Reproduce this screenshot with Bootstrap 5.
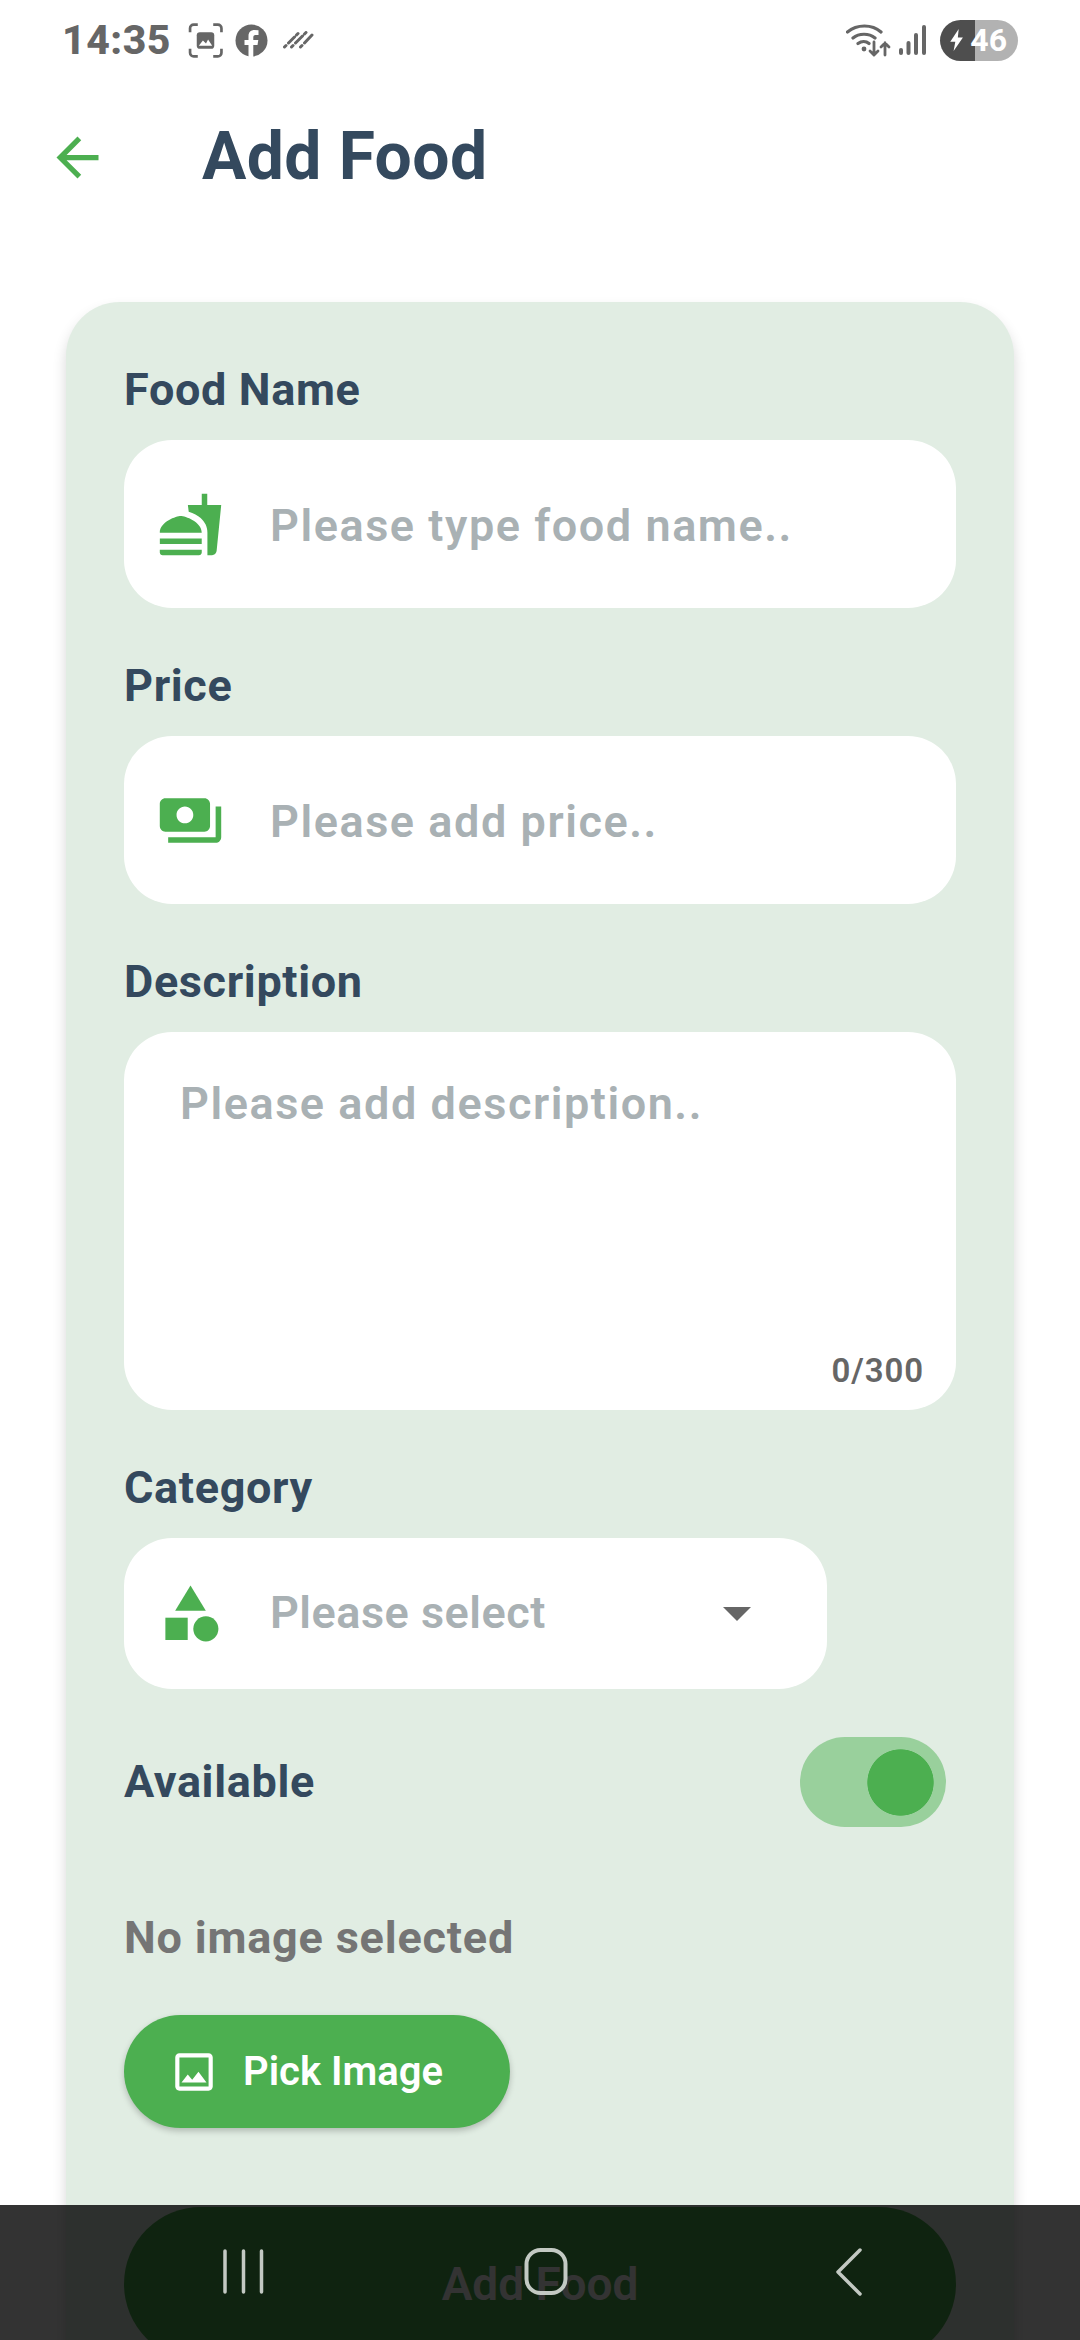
<!DOCTYPE html>
<html lang="en">
<head>
<meta charset="utf-8">
<title>Add Food</title>
<link href="https://cdn.jsdelivr.net/npm/bootstrap@5.3.0/dist/css/bootstrap.min.css" rel="stylesheet">
<style>
html,body{height:2340px;overflow:hidden;background:#fff;font-family:Roboto,"Liberation Sans",sans-serif}
.phone{position:relative;height:2340px;overflow:hidden}
.statusbar{height:80px;padding:0 62px;color:#666}
.clock{font-size:41px;font-weight:800;line-height:1;letter-spacing:.5px;margin-right:17px}
.st-ic{display:block;fill:#666}
.shot-ic{margin-right:12px}
.stripes{margin-left:15px}
.sig-ic{margin-left:8px}
.batt{width:78px;height:41px;border-radius:21px;background:linear-gradient(90deg,#4e4e4e 45%,#b2b2b2 45%);color:#fff;font-size:32px;font-weight:700;line-height:41px;margin-left:14px;padding-right:11px}
.bolt{left:10px}
.appbar{height:152px;padding:2px 0 0 46px}
.back-ic{width:63px;height:63px;fill:#4caf50}
.page-title{font-size:66px;font-weight:700;letter-spacing:.4px;color:#34495e;margin:0 0 0 93px;line-height:1}
.form-panel{margin:70px 66px 0;padding:63px 58px 0;background:#e1ede3;border-radius:54px 54px 0 0;box-shadow:0 8px 14px rgba(0,0,0,.16);height:2300px}
.fld-label{display:block;font-size:45px;font-weight:700;line-height:50px;height:50px;letter-spacing:.65px;color:#34495e;margin:0 0 25px}
.fld{height:168px;margin-bottom:53px;background:#fff;border-radius:48px;padding-left:33px;gap:46px}
.fld-ic{width:67px;height:67px;flex:none;fill:#4caf50}
.fld-in,.fld-in:focus{border:0;padding:3px 0 0;background:transparent;box-shadow:none;font-size:45px;font-weight:600;letter-spacing:1.55px;color:#34495e;border-radius:0}
.fld-in::placeholder,.ph-txt{color:#a9b1b4;opacity:1}
.area-wrap{position:relative;height:378px;margin-bottom:53px;background:#fff;border-radius:48px}
.area-in,.area-in:focus{height:100%;padding:47px 56px 0;resize:none;line-height:50px;background:transparent}
.counter{position:absolute;right:32px;bottom:19px;font-size:33px;font-weight:600;line-height:40px;letter-spacing:.9px;color:#666}
.sel-box{width:703px;height:151px;background:#fff;border-radius:48px;padding:0 76px 0 33px;gap:46px;margin-bottom:48px}
.ph-txt{font-size:45px;font-weight:600;letter-spacing:.5px;padding-bottom:2px}
.caret-tri{width:0;height:0;border-left:14px solid transparent;border-right:14px solid transparent;border-top:14px solid #666;margin-left:auto}
.avail-row{height:90px;margin-bottom:86px;padding-right:10px}
.avail-row .fld-label{margin:0}
.form-switch .sw-in.form-check-input{width:146px;height:90px;margin:0;float:none;border:0;border-radius:45px;background-color:#99d09c;background-image:radial-gradient(circle closest-side,#4caf50 98%,transparent 100%);background-size:67px 67px;background-repeat:no-repeat;background-position:right 12px center;box-shadow:none}
.switch-box{padding:0;margin:0;min-height:0}
.no-img{font-size:45px;font-weight:700;line-height:50px;letter-spacing:.8px;color:#757575;margin:0 0 52px}
.pick-btn,.pick-btn:hover{width:386px;height:113px;padding:0 0 0 45px;gap:24px;border:0;border-radius:57px;background:#4caf50;color:#fff;font-size:40px;font-weight:600;box-shadow:0 3px 6px rgba(0,0,0,.22);margin-bottom:79px}
.pick-btn svg{width:50px;height:50px;fill:#fff;flex:none}
.add-btn,.add-btn:hover{width:100%;height:154px;border:0;border-radius:77px;background:#4caf50;color:#fff;font-size:46px;font-weight:600;padding:0}
.sysnav{position:absolute;left:0;right:0;bottom:0;height:135px;background:rgba(0,0,0,.8)}
.sysnav svg{display:block;width:1080px;height:135px}
</style>
</head>
<body>
<div class="phone">
  <div class="statusbar d-flex align-items-center justify-content-between">
    <div class="d-flex align-items-center">
      <span class="clock">14:35</span>
      <svg class="st-ic shot-ic" width="35" height="35" viewBox="0 0 33 34"><path d="M1.500 9V5a3.500 3.500 0 0 1 3.500-3.500H9M24 1.500h4.500A3.500 3.500 0 0 1 32 5v4M32 25v4a3.500 3.500 0 0 1-3.500 3.500H24M9 32.500H5A3.500 3.500 0 0 1 1.500 29v-4" fill="none" stroke="#666" stroke-width="2.600"/><rect x="8" y="9" width="17" height="16" rx="3"/><path d="M10 22l4-5 3 3 2-4 4 6z" fill="#fff"/></svg>
      <svg class="st-ic" width="33" height="33" viewBox="0 0 32 33"><circle cx="16" cy="16.500" r="16"/><path d="M13 33V21H9v-5h4v-4c0-4 2.500-6 6-6l4 .3V11h-2.800c-2 0-2.400 1-2.400 2.400V16h5l-.8 5h-4.200v12z" fill="#fff"/></svg>
      <svg class="stripes" width="31" height="18" viewBox="0 0 30 18"><path d="M1 16l1.500-1.500M5 12l6-6M13 4l1.500-1.500M8 16l1.500-1.500M12 12l7-7M21 3l1.500-1.500M17 16l1.500-1.500M21 12l7.500-8" fill="none" stroke="#666" stroke-width="3" stroke-linecap="round"/></svg>
    </div>
    <div class="d-flex align-items-center">
      <svg width="45" height="34" viewBox="0 0 45 34" fill="none" stroke="#666" stroke-linecap="round"><path d="M1.500 9C11 1 26 1 35 9M7 15c6-5 16-5 22 0M12 20.500c3.500-2.500 8-2.500 11 0" stroke-width="3.200"/><circle cx="18" cy="26" r="2.400" fill="#666" stroke="none"/><path d="M28 19v13m-4-4 4 4 4-4M39 32V20m-4 4 4-4 4 4" stroke-width="2.800"/></svg>
      <svg class="sig-ic" width="27" height="30" viewBox="0 0 27 30" fill="#666"><rect x="0" y="23" width="4" height="7" rx="2"/><rect x="7.500" y="16" width="4" height="14" rx="2"/><rect x="15" y="8" width="4" height="22" rx="2"/><rect x="23" y="0" width="4" height="30" rx="2"/></svg>
      <div class="batt d-flex align-items-center justify-content-end position-relative"><svg class="bolt position-absolute top-50 translate-middle-y" width="14" height="22" viewBox="0 0 16 26"><path d="M10 0L0 15h6l-2 11L15 10H9z" fill="#fff"/></svg><span>46</span></div>
    </div>
  </div>

  <div class="appbar d-flex align-items-center">
    <svg class="back-ic" viewBox="0 0 24 24"><path d="M20 11H7.830l5.590-5.590L12 4l-8 8 8 8 1.410-1.410L7.830 13H20v-2z"/></svg>
    <h1 class="page-title">Add Food</h1>
  </div>

  <form class="form-panel">
    <label class="fld-label" for="fn">Food Name</label>
    <div class="fld d-flex align-items-center">
      <svg class="fld-ic" viewBox="0 0 24 24"><path d="M18.060 22.990h1.660c.84 0 1.530-.64 1.630-1.460L23 5.050h-5V1h-1.970v4.050h-4.970l.3 2.340c1.710.47 3.310 1.320 4.270 2.260 1.440 1.420 2.430 2.890 2.430 5.290v8.050zM1 21.990V21h15.030v.99c0 .55-.45 1-1.010 1H2.010c-.56 0-1.010-.45-1.010-1zm15.030-7c0-4-6.010-6.010-7.520-6.010-1.500 0-7.510 2.010-7.510 6.010h15.030zM1.020 17h15v2h-15z"/></svg>
      <input id="fn" class="form-control fld-in" type="text" placeholder="Please type food name..">
    </div>

    <label class="fld-label" for="pr">Price</label>
    <div class="fld d-flex align-items-center">
      <svg class="fld-ic" viewBox="0 0 24 24"><path d="M19 14V6c0-1.100-.9-2-2-2H3c-1.100 0-2 .9-2 2v8c0 1.100.9 2 2 2h14c1.100 0 2-.9 2-2zm-9-1c-1.660 0-3-1.340-3-3s1.340-3 3-3 3 1.340 3 3-1.340 3-3 3zm13-6v11c0 1.100-.9 2-2 2H4v-2h17V7h2z"/></svg>
      <input id="pr" class="form-control fld-in" type="text" placeholder="Please add price..">
    </div>

    <label class="fld-label" for="ds">Description</label>
    <div class="area-wrap">
      <textarea id="ds" class="form-control fld-in area-in" placeholder="Please add description.."></textarea>
      <span class="counter">0/300</span>
    </div>

    <label class="fld-label">Category</label>
    <div class="sel-box d-flex align-items-center">
      <svg class="fld-ic" viewBox="0 0 24 24"><path d="M12 2l-5.500 9h11z"/><circle cx="17.500" cy="17.500" r="4.500"/><path d="M3 13.500h8v8H3z"/></svg>
      <span class="ph-txt">Please select</span>
      <span class="caret-tri"></span>
    </div>

    <div class="avail-row d-flex align-items-center justify-content-between">
      <label class="fld-label" for="av">Available</label>
      <div class="form-check form-switch switch-box"><input id="av" class="form-check-input sw-in" type="checkbox" role="switch" checked></div>
    </div>

    <p class="no-img">No image selected</p>
    <button type="button" class="btn pick-btn d-flex align-items-center">
      <svg viewBox="0 0 24 24"><path d="M19 5v14H5V5h14m0-2H5c-1.100 0-2 .9-2 2v14c0 1.100.9 2 2 2h14c1.100 0 2-.9 2-2V5c0-1.100-.9-2-2-2zm-4.860 8.860l-3 3.870L9 13.140 6 17h12l-3.860-5.140z"/></svg>
      <span>Pick Image</span>
    </button>
    <button type="button" class="btn add-btn">Add Food</button>
  </form>

  <div class="sysnav">
    <svg viewBox="0 0 1080 135" fill="none" stroke="#c3c9c3" stroke-linecap="round">
      <path d="M225 46v41M243.500 46v41M261.500 46v41" stroke-width="3.500"/>
      <rect x="526.500" y="45" width="39" height="43" rx="14" stroke-width="4"/>
      <path d="M860 45l-22 22 22 22" stroke-width="3.500" stroke-linejoin="round"/>
    </svg>
  </div>
</div>
<script src="https://cdn.jsdelivr.net/npm/bootstrap@5.3.0/dist/js/bootstrap.bundle.min.js"></script>
</body>
</html>
